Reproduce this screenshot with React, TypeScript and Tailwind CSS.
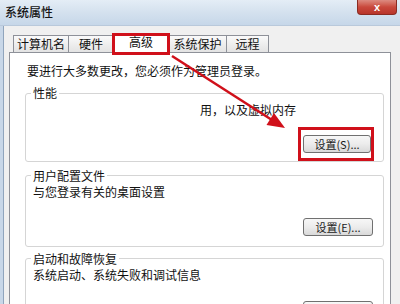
import React from 'react';

const font = { fontFamily: '"Noto Sans CJK SC", "Noto Sans", sans-serif' };

const Btn = ({ label, w = 'w-[68px]', children }: { label?: string; w?: string; children?: React.ReactNode }) => (
  <div
    className={`relative ${w} h-[18px] border border-[#707070] rounded-[3px] bg-linear-to-b from-[#f7f7f7] via-[#ececec] to-[#d9d9d9] flex items-center justify-center text-[11px] leading-none text-[#1a1a1a]`}
  >
    {label}
    {children}
  </div>
);

const Tab = ({ label, w, active, first }: { label: string; w: string; active?: boolean; first?: boolean }) => (
  <div
    className={`relative ${w} ${first ? '' : '-ml-px'} flex items-center justify-center border-t border-l border-r border-[#8e9199] text-[12px] leading-[14px] text-[#111] ${
      active ? 'h-[20px] bg-white z-10 -mb-px pb-[3px]' : 'h-[17px] bg-linear-to-b from-[#fafafa] to-[#e3e3e3]'
    }`}
  >
    {label}
    {active && <span className="absolute -left-[2px] -right-[2px] -top-[1px] -bottom-[2px] border-[3px] border-[#d0101a]" />}
  </div>
);

export default function App() {
  return (
    <div className="relative w-[400px] h-[304px] overflow-hidden bg-[#f0f0f0]" style={font}>
      {/* title bar */}
      <div className="h-[26px] flex justify-between bg-linear-to-b from-[#e4edf6] via-[#d4e1ee] to-[#c6d7e9] border-b border-[#b9c9db]">
        <div className="pl-[5px] pt-[5px] text-[12px] leading-[14px] font-medium text-[#141414]">系统属性</div>
        <div className="mr-[3px] w-[40px] h-[15px] rounded-b-[4px] border border-t-0 border-[#8a2b22] bg-linear-to-b from-[#dc8a80] via-[#c9483c] to-[#b8352a] flex items-center justify-center text-white text-[11px] font-bold leading-none" style={{ fontFamily: '"Liberation Sans", sans-serif' }}>
          x
        </div>
      </div>

      <div className="flex h-[278px]">
        {/* left frame */}
        <div className="w-[4px] bg-[#c8d7e8] border-r border-[#90a5bd]" />

        <div className="flex-1 flex flex-col">
          {/* tabs */}
          <div className="h-[26px] pt-[7px] pl-[9px] flex items-end">
            <Tab label="计算机名" w="w-[56px]" first />
            <Tab label="硬件" w="w-[46px]" />
            <Tab label="高级" w="w-[56px]" active />
            <Tab label="系统保护" w="w-[59px]" />
            <Tab label="远程" w="w-[43px]" />
          </div>

          {/* panel */}
          <div className="ml-[5px] w-[382px] flex-1 border border-b-0 border-[#8e9199] bg-white pt-[11px]">
            <div className="pl-[17px] text-[12px] leading-[14px] text-[#111]">要进行大多数更改，您必须作为管理员登录。</div>

            <fieldset className="mt-[8px] ml-[15px] mr-[6px] border border-[#d5d5d5] rounded-[3px] px-0 pb-[8px]">
              <legend className="ml-[5px] px-[2px] text-[12px] leading-[14px] text-[#111]">性能</legend>
              <div className="pt-[3px] pl-[174px] text-[12px] leading-[14px] text-[#111]">用，以及虚拟内存</div>
              <div className="mt-[18px] flex justify-end pr-[12px]">
                <Btn label="设置(S)...">
                  <span className="absolute -left-[6px] -right-[4px] -top-[9px] -bottom-[9px] border-[3px] border-[#d0101a]" />
                </Btn>
              </div>
            </fieldset>

            <fieldset className="mt-[7px] ml-[15px] mr-[6px] border border-[#d5d5d5] rounded-[3px] pb-[10px]">
              <legend className="ml-[5px] px-[2px] text-[12px] leading-[13px] text-[#111]">用户配置文件</legend>
              <div className="pt-[3px] pl-[7px] text-[12px] leading-[14px] text-[#111]">与您登录有关的桌面设置</div>
              <div className="mt-[19px] flex justify-end pr-[10px]">
                <Btn label="设置(E)..." w="w-[70px]" />
              </div>
            </fieldset>

            <fieldset className="mt-[5px] ml-[15px] mr-[6px] border border-[#d5d5d5] rounded-[3px] pb-[10px]">
              <legend className="ml-[5px] px-[2px] text-[12px] leading-[13px] text-[#111]">启动和故障恢复</legend>
              <div className="pt-[3px] pl-[7px] text-[12px] leading-[14px] text-[#111]">系统启动、系统失败和调试信息</div>
              <div className="mt-[19px] flex justify-end pr-[10px]">
                <Btn w="w-[70px]" />
              </div>
            </fieldset>
          </div>
        </div>
      </div>

      {/* annotation arrow */}
      <svg className="absolute inset-0 pointer-events-none" width="400" height="304" viewBox="0 0 400 304">
        <line x1="172" y1="56" x2="272" y2="120" stroke="#d0101a" strokeWidth="2.5" />
        <polygon points="285,128 266.5,125 274,113" fill="#d0101a" />
      </svg>
    </div>
  );
}
